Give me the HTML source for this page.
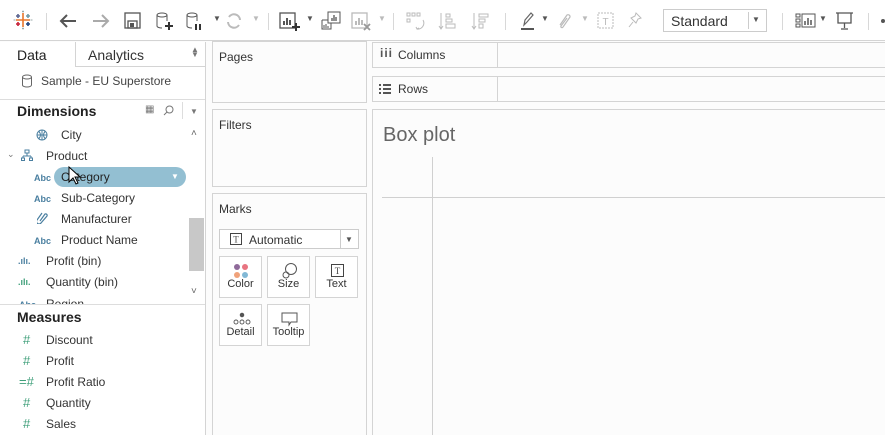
<!DOCTYPE html>
<html style="width:885px;height:435px;overflow:hidden"><head><style>
*{box-sizing:border-box;margin:0;padding:0}
body{width:885px;height:435px;overflow:hidden;background:#fcfcfc;font-family:"Liberation Sans",sans-serif;font-size:12px;color:#333;position:relative}
.a{position:absolute}
.tb{left:0;top:0;width:885px;height:41px;background:#fff;border-bottom:1px solid #d4d4d4}
.sep{position:absolute;top:13px;width:1px;height:17px;background:#d8d8d8}
.box{position:absolute;border:1px solid #d4d4d4;background:#fcfcfc}
.t{position:absolute;white-space:nowrap}
.abc{position:absolute;font-size:9px;color:#4a7fa0;font-weight:bold}
.hash{position:absolute;color:#3f9f7a;font-size:13px}
.card{position:absolute;width:43px;height:42px;border:1px solid #d4d4d4;background:#fff;text-align:center;font-size:11px}
.card span{position:absolute;left:0;right:0;bottom:7px}
</style></head><body>
<div class="a tb">
<svg class="a" style="left:13px;top:10px" width="20" height="20" viewBox="0 0 20 20">
<g stroke-width="1.6"><path d="M10 3v14M3 10h14" stroke="#e8762b"/><path d="M5 4v4M3 6h4" stroke="#5b6591"/><path d="M15 4v4M13 6h4" stroke="#7099a6"/><path d="M5 12v4M3 14h4" stroke="#c72037"/><path d="M15 12v4M13 14h4" stroke="#1f447e"/><path d="M10 0.5v2M9 1.5h2M10 17.5v2M9 18.5h2M0.5 10h2M17.5 10h2" stroke="#9aa" stroke-width="1"/></g></svg>
<div class="sep" style="left:46px"></div>
<svg class="a" style="left:58px;top:11px" width="20" height="20" viewBox="0 0 20 20"><path d="M18 10H3M9 4l-6 6 6 6" stroke="#555" stroke-width="2" fill="none"/></svg>
<svg class="a" style="left:91px;top:11px" width="20" height="20" viewBox="0 0 20 20"><path d="M2 10h15M11 4l6 6-6 6" stroke="#aaa" stroke-width="2" fill="none"/></svg>
<svg class="a" style="left:124px;top:12px" width="18" height="18" viewBox="0 0 18 18"><rect x="1" y="1" width="15" height="15" fill="none" stroke="#555" stroke-width="1.3"/><rect x="4" y="9" width="9" height="7" fill="none" stroke="#555" stroke-width="1.3"/><rect x="6" y="11" width="4" height="4" fill="#555"/></svg>
<svg class="a" style="left:156px;top:12px" width="18" height="20" viewBox="0 0 18 20"><ellipse cx="6" cy="3" rx="5" ry="2" fill="none" stroke="#555"/><path d="M1 3v11c0 1 2 2 5 2M11 3v6" fill="none" stroke="#555"/><path d="M13 10v8M9 14h8" stroke="#333" stroke-width="2"/></svg>
<svg class="a" style="left:186px;top:12px" width="20" height="20" viewBox="0 0 20 20"><ellipse cx="6" cy="3" rx="5" ry="2" fill="none" stroke="#555"/><path d="M1 3v11c0 1 2 2 5 2M11 3v6" fill="none" stroke="#555"/><path d="M10 12v6M14 12v6" stroke="#333" stroke-width="2"/></svg>
<div class="t" style="left:213px;top:14px;font-size:8px;color:#555">▼</div>
<svg class="a" style="left:225px;top:12px" width="18" height="18" viewBox="0 0 18 18"><path d="M15 8a6 6 0 0 0-11-3M3 10a6 6 0 0 0 11 3" fill="none" stroke="#bbb" stroke-width="2"/></svg>
<div class="t" style="left:252px;top:14px;font-size:8px;color:#bbb">▼</div>
<div class="sep" style="left:268px"></div>
<svg class="a" style="left:279px;top:12px" width="22" height="20" viewBox="0 0 22 20"><rect x="1" y="1" width="15" height="15" fill="none" stroke="#555" stroke-width="1.3"/><path d="M5 13V9M8 13V6M11 13V8" stroke="#555" stroke-width="2"/><path d="M17 11v8M13 15h8" stroke="#333" stroke-width="2"/></svg>
<div class="t" style="left:306px;top:14px;font-size:8px;color:#555">▼</div>
<svg class="a" style="left:321px;top:11px" width="20" height="20" viewBox="0 0 20 20"><rect x="7" y="1" width="12" height="11" fill="#fff" stroke="#555"/><path d="M11 10V7M13 10V4M15 10V6" stroke="#555" stroke-width="1.3"/><path d="M1 9h6M1 9v9h9v-6" fill="none" stroke="#555"/><path d="M3 17v-3M5 17v-4M7 17v-2" stroke="#555"/></svg>
<svg class="a" style="left:351px;top:12px" width="22" height="20" viewBox="0 0 22 20"><rect x="1" y="1" width="15" height="15" fill="none" stroke="#bbb" stroke-width="1.3"/><path d="M5 13V9M8 13V6M11 13V8" stroke="#bbb" stroke-width="2"/><path d="M13 12l6 6M19 12l-6 6" stroke="#999" stroke-width="1.8"/></svg>
<div class="t" style="left:378px;top:14px;font-size:8px;color:#bbb">▼</div>
<div class="sep" style="left:393px"></div>
<svg class="a" style="left:406px;top:12px" width="20" height="20" viewBox="0 0 20 20" fill="none" stroke="#bbb"><rect x="1" y="1" width="3" height="3"/><rect x="6" y="1" width="3" height="3"/><rect x="11" y="1" width="3" height="3"/><rect x="1" y="7" width="3" height="3"/><path d="M17 8a6 6 0 0 1-6 9M10 15l1 2 2-1"/></svg>
<svg class="a" style="left:438px;top:12px" width="20" height="20" viewBox="0 0 20 20" fill="none" stroke="#bbb"><path d="M3 1v16M1 14l2 3 2-3"/><rect x="8" y="2" width="4" height="3"/><rect x="8" y="7" width="6" height="3"/><rect x="8" y="12" width="9" height="4"/></svg>
<svg class="a" style="left:471px;top:12px" width="20" height="20" viewBox="0 0 20 20" fill="none" stroke="#bbb"><path d="M3 1v16M1 14l2 3 2-3"/><rect x="8" y="2" width="9" height="3"/><rect x="8" y="7" width="6" height="3"/><rect x="8" y="12" width="4" height="4"/></svg>
<div class="sep" style="left:505px"></div>
<svg class="a" style="left:520px;top:11px" width="16" height="20" viewBox="0 0 16 20"><path d="M4 14l1-5 6-7 2 2-6 7z" fill="none" stroke="#666" stroke-width="1.2"/><path d="M1 18h13" stroke="#555" stroke-width="2"/></svg>
<div class="t" style="left:541px;top:14px;font-size:8px;color:#555">▼</div>
<svg class="a" style="left:556px;top:11px" width="16" height="20" viewBox="0 0 16 20"><path d="M4 14l7-10a2 2 0 0 1 3 2l-7 10a1 1 0 0 1-2-1l6-8" fill="none" stroke="#bbb" stroke-width="1.2"/></svg>
<div class="t" style="left:581px;top:14px;font-size:8px;color:#bbb">▼</div>
<svg class="a" style="left:597px;top:11px" width="18" height="18" viewBox="0 0 18 18"><rect x="1" y="2" width="15" height="15" fill="none" stroke="#bbb" stroke-dasharray="2 1"/><text x="8.5" y="14" font-size="10" text-anchor="middle" fill="#bbb" font-family="Liberation Sans">T</text></svg>
<svg class="a" style="left:628px;top:11px" width="16" height="18" viewBox="0 0 16 18"><path d="M8 2l5 5-3 1-2 4-5-5 4-2zM5 11l-4 5" fill="none" stroke="#bbb"/></svg>
<div class="a" style="left:663px;top:9px;width:104px;height:23px;border:1px solid #ccc;background:#fff"><span class="t" style="left:7px;top:3px;font-size:14px;color:#333">Standard</span><div class="a" style="left:84px;top:2px;width:1px;height:17px;background:#ccc"></div><span class="t" style="left:88px;top:5px;font-size:8px;color:#555">▼</span></div>
<div class="sep" style="left:782px"></div>
<svg class="a" style="left:795px;top:12px" width="22" height="18" viewBox="0 0 22 18" fill="none" stroke="#555"><rect x="1" y="2" width="4" height="3"/><rect x="1" y="7" width="4" height="3"/><rect x="1" y="12" width="4" height="3"/><rect x="7" y="2" width="13" height="13"/><path d="M10 13v-4M13 13V6M16 13V8" stroke-width="1.5"/></svg>
<div class="t" style="left:819px;top:14px;font-size:8px;color:#555">▼</div>
<svg class="a" style="left:835px;top:11px" width="20" height="20" viewBox="0 0 20 20" fill="none" stroke="#555" stroke-width="1.3"><path d="M1 2h17M3 2v10h13V2M9.5 12v5M6 18h7"/></svg>
<div class="sep" style="left:868px"></div>
<div class="a" style="left:881px;top:19px;width:4px;height:4px;border-radius:2px;background:#555"></div>
</div>

<!-- left panel -->
<div class="a" style="left:0;top:42px;width:206px;height:393px;background:#fff;border-right:1px solid #d4d4d4"></div>
<div class="a" style="left:75px;top:42px;width:130px;height:25px;background:#fff;border-left:1px solid #d4d4d4;border-bottom:1px solid #d4d4d4"></div>
<div class="t" style="left:17px;top:47px;font-size:14px;color:#222">Data</div>
<div class="t" style="left:88px;top:47px;font-size:14px;color:#333">Analytics</div>
<div class="t" style="left:191px;top:47px;font-size:8px;color:#777;line-height:5px">▲<br>▼</div>
<svg class="a" style="left:21px;top:74px" width="12" height="14" viewBox="0 0 12 14" fill="none" stroke="#666"><ellipse cx="6" cy="3" rx="4.5" ry="2"/><path d="M1.5 3v8c0 1.2 2 2 4.5 2s4.5-.8 4.5-2V3"/></svg>
<div class="t" style="left:41px;top:74px;font-size:12px;color:#444">Sample - EU Superstore</div>
<div class="a" style="left:0;top:99px;width:205px;height:1px;background:#ddd"></div>
<div class="t" style="left:17px;top:103px;font-size:14px;font-weight:bold;color:#222">Dimensions</div>
<div class="t" style="left:145px;top:104px;font-size:10px;color:#777">▦</div>
<svg class="a" style="left:163px;top:105px" width="11" height="11" viewBox="0 0 11 11" fill="none" stroke="#777"><circle cx="6.5" cy="4.5" r="3.5"/><path d="M4 7l-3 3"/></svg>
<div class="a" style="left:182px;top:102px;width:1px;height:17px;background:#ddd"></div>
<div class="t" style="left:190px;top:107px;font-size:8px;color:#777">▼</div>
<div class="t" style="left:191px;top:128px;font-size:10px;color:#666">˄</div>
<svg class="a" style="left:36px;top:129px" width="12" height="12" viewBox="0 0 12 12" fill="none" stroke="#4a7fa0"><circle cx="6" cy="6" r="5"/><path d="M1 6h10M6 1v10M3 2.5q3 3.5 0 7M9 2.5q-3 3.5 0 7"/></svg>
<div class="t" style="left:61px;top:128px">City</div>
<div class="t" style="left:7px;top:149px;font-size:9px;color:#777">⌄</div>
<svg class="a" style="left:21px;top:149px" width="12" height="12" viewBox="0 0 12 12" fill="none" stroke="#4a7fa0"><rect x="4" y="1" width="4" height="3"/><path d="M6 4v3M2 7h8M2 7v2M10 7v2"/><rect x="0.5" y="9" width="3" height="2.5"/><rect x="8.5" y="9" width="3" height="2.5"/></svg>
<div class="t" style="left:46px;top:149px">Product</div>
<div class="abc" style="left:34px;top:173px">Abc</div>
<div class="a" style="left:54px;top:167px;width:132px;height:20px;border-radius:10px;background:#93bfd2"></div>
<div class="t" style="left:61px;top:170px;color:#222">Category</div>
<div class="t" style="left:171px;top:172px;font-size:8px;color:#fff">▼</div>
<svg class="a" style="left:68px;top:166px" width="14" height="20" viewBox="0 0 14 20"><path d="M1 1v15l4-4 3 6 2-1-3-6h5z" fill="#fff" stroke="#000"/></svg>
<div class="abc" style="left:34px;top:194px">Abc</div>
<div class="t" style="left:61px;top:191px">Sub-Category</div>
<svg class="a" style="left:37px;top:211px" width="11" height="13" viewBox="0 0 11 13" fill="none" stroke="#4a7fa0" stroke-width="1.2"><path d="M3 10l5-7a1.5 1.5 0 0 1 2 2l-6 7a2.5 2.5 0 0 1-4-3l5-7"/></svg>
<div class="t" style="left:61px;top:212px">Manufacturer</div>
<div class="abc" style="left:34px;top:236px">Abc</div>
<div class="t" style="left:61px;top:233px">Product Name</div>
<div class="a" style="left:189px;top:218px;width:15px;height:53px;background:#c8c8c8"></div>
<div class="t" style="left:18px;top:256px;font-size:9px;color:#4a7fa0;font-weight:bold">.ılı.</div>
<div class="t" style="left:46px;top:254px">Profit (bin)</div>
<div class="t" style="left:18px;top:277px;font-size:9px;color:#3f9f7a;font-weight:bold">.ılı.</div>
<div class="t" style="left:46px;top:275px">Quantity (bin)</div>
<div class="t" style="left:191px;top:286px;font-size:10px;color:#666">˅</div>
<div class="a" style="left:0;top:296px;width:185px;height:8px;overflow:hidden"><div class="t" style="left:46px;top:1px">Region</div><div class="abc" style="left:19px;top:4px">Abc</div></div>
<div class="a" style="left:0;top:304px;width:205px;height:1px;background:#ddd"></div>
<div class="t" style="left:17px;top:309px;font-size:14px;font-weight:bold;color:#222">Measures</div>
<div class="hash" style="left:23px;top:332px">#</div><div class="t" style="left:46px;top:333px">Discount</div>
<div class="hash" style="left:23px;top:353px">#</div><div class="t" style="left:46px;top:354px">Profit</div>
<div class="hash" style="left:19px;top:374px">=#</div><div class="t" style="left:46px;top:375px">Profit Ratio</div>
<div class="hash" style="left:23px;top:395px">#</div><div class="t" style="left:46px;top:396px">Quantity</div>
<div class="hash" style="left:23px;top:416px">#</div><div class="t" style="left:46px;top:417px">Sales</div>

<!-- middle -->
<div class="box" style="left:212px;top:41px;width:155px;height:62px"></div>
<div class="t" style="left:219px;top:50px">Pages</div>
<div class="box" style="left:212px;top:109px;width:155px;height:78px"></div>
<div class="t" style="left:219px;top:118px">Filters</div>
<div class="box" style="left:212px;top:193px;width:155px;height:242px;border-bottom:none"></div>
<div class="t" style="left:219px;top:202px">Marks</div>
<div class="a" style="left:219px;top:229px;width:140px;height:20px;border:1px solid #ccc;background:#fff"></div>
<svg class="a" style="left:230px;top:233px" width="12" height="12" viewBox="0 0 12 12"><rect x="0.5" y="0.5" width="11" height="11" fill="none" stroke="#444"/><text x="6" y="9.5" font-size="9" text-anchor="middle" fill="#444" font-family="Liberation Serif">T</text></svg>
<div class="t" style="left:249px;top:233px;font-size:12px">Automatic</div>
<div class="a" style="left:340px;top:230px;width:1px;height:18px;background:#ccc"></div>
<div class="t" style="left:345px;top:235px;font-size:8px;color:#555">▼</div>
<div class="card" style="left:219px;top:256px"><svg class="a" style="left:13px;top:6px" width="16" height="16"><circle cx="4" cy="4" r="3" fill="#8f6a9a"/><circle cx="12" cy="4" r="3" fill="#e87481"/><circle cx="4" cy="12" r="3" fill="#f0a27a"/><circle cx="12" cy="12" r="3" fill="#82b9d6"/></svg><span>Color</span></div>
<div class="card" style="left:267px;top:256px"><svg class="a" style="left:13px;top:5px" width="18" height="18" fill="none" stroke="#555"><circle cx="10" cy="7" r="5.5"/><circle cx="5" cy="13" r="3"/></svg><span>Size</span></div>
<div class="card" style="left:315px;top:256px"><svg class="a" style="left:15px;top:7px" width="13" height="13"><rect x="0.5" y="0.5" width="12" height="12" fill="none" stroke="#444"/><text x="6.5" y="10" font-size="9" text-anchor="middle" fill="#444" font-family="Liberation Serif">T</text></svg><span>Text</span></div>
<div class="card" style="left:219px;top:304px"><svg class="a" style="left:13px;top:7px" width="18" height="14" fill="none" stroke="#555" stroke-width="0.9"><circle cx="9" cy="3" r="1.8" fill="#555"/><circle cx="3" cy="10" r="2"/><circle cx="9" cy="10" r="2"/><circle cx="15" cy="10" r="2"/></svg><span>Detail</span></div>
<div class="card" style="left:267px;top:304px"><svg class="a" style="left:13px;top:7px" width="18" height="16" fill="none" stroke="#555"><path d="M1 1h15v9h-6l-2 3v-3H1z"/></svg><span>Tooltip</span></div>

<!-- shelves -->
<div class="a" style="left:372px;top:42px;width:513px;height:26px;border:1px solid #d4d4d4;border-right:none;background:#fcfcfc"></div>
<div class="a" style="left:497px;top:42px;width:1px;height:26px;background:#d4d4d4"></div>
<div class="t" style="left:380px;top:46px;font-size:12px;font-weight:bold;color:#555;letter-spacing:1px">iii</div>
<div class="t" style="left:398px;top:48px">Columns</div>
<div class="a" style="left:372px;top:76px;width:513px;height:26px;border:1px solid #d4d4d4;border-right:none;background:#fcfcfc"></div>
<div class="a" style="left:497px;top:76px;width:1px;height:26px;background:#d4d4d4"></div>
<svg class="a" style="left:379px;top:84px" width="12" height="10" fill="#555"><rect x="0" y="0" width="2" height="2"/><rect x="0" y="4" width="2" height="2"/><rect x="0" y="8" width="2" height="2"/><rect x="4" y="0" width="8" height="2"/><rect x="4" y="4" width="8" height="2"/><rect x="4" y="8" width="8" height="2"/></svg>
<div class="t" style="left:398px;top:82px">Rows</div>
<div class="a" style="left:372px;top:109px;width:513px;height:326px;border:1px solid #d4d4d4;border-right:none;border-bottom:none;background:#fcfcfc"></div>
<div class="t" style="left:383px;top:124px;font-size:20px;color:#666">Box plot</div>
<div class="a" style="left:432px;top:157px;width:1px;height:278px;background:#d0d0d0"></div>
<div class="a" style="left:382px;top:197px;width:503px;height:1px;background:#d0d0d0"></div>
</body></html>
